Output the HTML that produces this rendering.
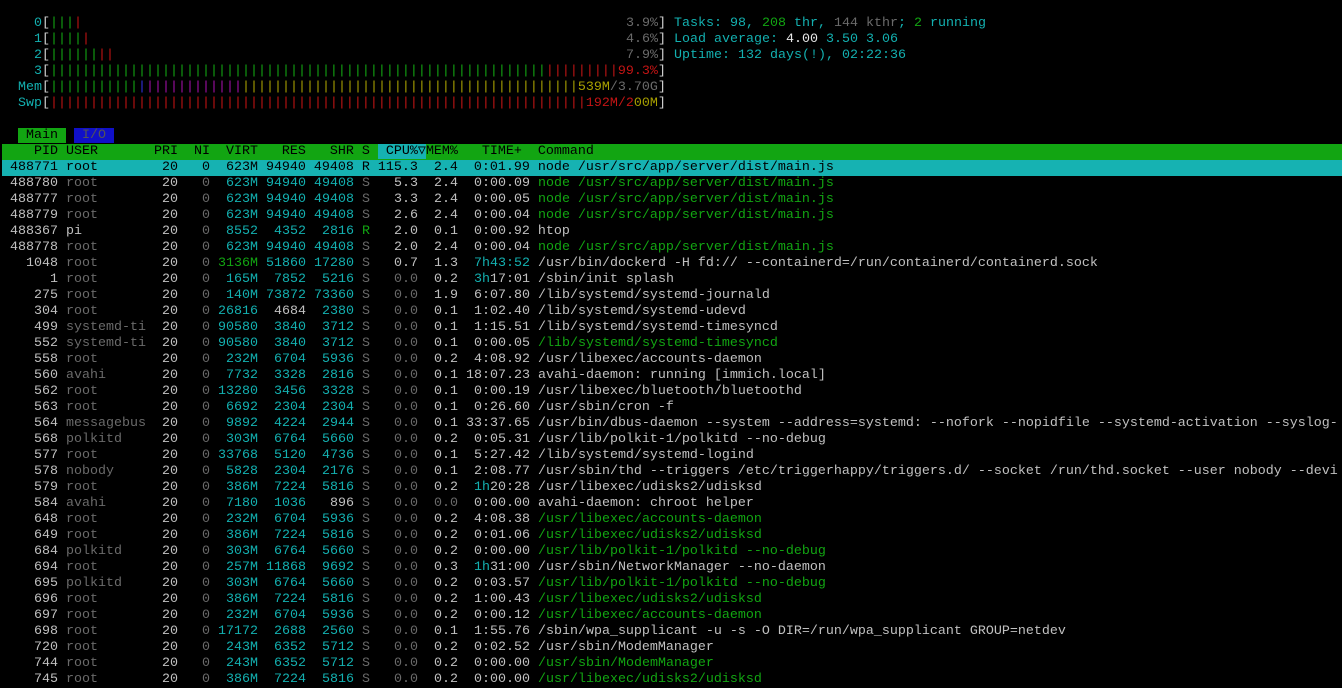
<!DOCTYPE html>
<html><head><meta charset="utf-8"><style>
html,body{margin:0;padding:0;background:#000;width:1342px;height:687px;overflow:hidden}
#t{position:absolute;left:2px;top:16px;right:0;font-family:"Liberation Mono","DejaVu Sans Mono",monospace;font-size:13.333px;line-height:16px;color:#c0c0c0}
#t div{height:16px;white-space:pre;position:relative}
i{font-style:normal}
.c{color:#13b0b0}.g{color:#12a512}.d{color:#6a6a6a}.r{color:#c21414}.y{color:#a8a000}.b{color:#3030e0}.m{color:#a010a8}.w{color:#e8e8e8}.br{color:#d0d0d0}
.a{position:absolute;top:0}
.hdr{background:#12a512;color:#000;width:1340px}
.sel{background:#16b2b2;color:#000;width:1340px}
.cp{background:#16b2b2}
.tm{background:#12a512;color:#000}.ti{background:#1010c8;color:#555}
</style></head><body><div id="t">
<div>    <i class=c>0</i><i class=br>[</i><i class=g>|||</i><i class=r>|</i><span class=a style="left:624px"><i class=d>3.9%</i><i class=br>]</i> <i class=c>Tasks: </i><i class=c>98</i><i class=c>, </i><i class=g>208</i><i class=c> thr, </i><i class=d>144 kthr</i><i class=c>; </i><i class=g>2</i><i class=c> running</i></span></div>
<div>    <i class=c>1</i><i class=br>[</i><i class=g>||||</i><i class=r>|</i><span class=a style="left:624px"><i class=d>4.6%</i><i class=br>]</i> <i class=c>Load average: </i><i class=w>4.00 </i><i class=c>3.50 </i><i class=c>3.06</i></span></div>
<div>    <i class=c>2</i><i class=br>[</i><i class=g>||||||</i><i class=r>||</i><span class=a style="left:624px"><i class=d>7.9%</i><i class=br>]</i> <i class=c>Uptime: 132 days(!), 02:22:36</i></span></div>
<div>    <i class=c>3</i><i class=br>[</i><i class=g>||||||||||||||||||||||||||||||||||||||||||||||||||||||||||||||</i><i class=r>|||||||||99.3%</i><i class=br>]</i></div>
<div>  <i class=c>Mem</i><i class=br>[</i><i class=g>|||||||||||</i><i class=b>|</i><i class=m>||||||||||||</i><i class=y>||||||||||||||||||||||||||||||||||||||||||539M</i><i class=d>/3.70G</i><i class=br>]</i></div>
<div>  <i class=c>Swp</i><i class=br>[</i><i class=r>|||||||||||||||||||||||||||||||||||||||||||||||||||||||||||||||||||192M/2</i><i class=y>00M</i><i class=br>]</i></div>
<div> </div>
<div>  <i class=tm> Main </i> <i class=ti> I/O </i></div>
<div class=hdr>    PID USER       PRI  NI  VIRT   RES   SHR S <i class=cp> CPU%▽</i>MEM%   TIME+  Command</div>
<div class=sel> 488771 root        20   0  623M 94940 49408 R 115.3  2.4  0:01.99 node /usr/src/app/server/dist/main.js</div>
<div> 488780 <i class=d>root      </i>  20   <i class=d>0</i>  <i class=c>623M</i> <i class=c>94940</i> <i class=c>49408</i> <i class=d>S</i>   5.3  2.4  0:00.09 <i class=g>node /usr/src/app/server/dist/main.js</i></div>
<div> 488777 <i class=d>root      </i>  20   <i class=d>0</i>  <i class=c>623M</i> <i class=c>94940</i> <i class=c>49408</i> <i class=d>S</i>   3.3  2.4  0:00.05 <i class=g>node /usr/src/app/server/dist/main.js</i></div>
<div> 488779 <i class=d>root      </i>  20   <i class=d>0</i>  <i class=c>623M</i> <i class=c>94940</i> <i class=c>49408</i> <i class=d>S</i>   2.6  2.4  0:00.04 <i class=g>node /usr/src/app/server/dist/main.js</i></div>
<div> 488367 pi          20   <i class=d>0</i>  <i class=c>8552</i>  <i class=c>4352</i>  <i class=c>2816</i> <i class=g>R</i>   2.0  0.1  0:00.92 htop</div>
<div> 488778 <i class=d>root      </i>  20   <i class=d>0</i>  <i class=c>623M</i> <i class=c>94940</i> <i class=c>49408</i> <i class=d>S</i>   2.0  2.4  0:00.04 <i class=g>node /usr/src/app/server/dist/main.js</i></div>
<div>   1048 <i class=d>root      </i>  20   <i class=d>0</i> <i class=g>3136M</i> <i class=c>51860</i> <i class=c>17280</i> <i class=d>S</i>   0.7  1.3  <i class=c>7h43:52</i> /usr/bin/dockerd -H fd:// --containerd=/run/containerd/containerd.sock</div>
<div>      1 <i class=d>root      </i>  20   <i class=d>0</i>  <i class=c>165M</i>  <i class=c>7852</i>  <i class=c>5216</i> <i class=d>S</i>   <i class=d>0.0</i>  0.2  <i class=c>3h</i>17:01 /sbin/init splash</div>
<div>    275 <i class=d>root      </i>  20   <i class=d>0</i>  <i class=c>140M</i> <i class=c>73872</i> <i class=c>73360</i> <i class=d>S</i>   <i class=d>0.0</i>  1.9  6:07.80 /lib/systemd/systemd-journald</div>
<div>    304 <i class=d>root      </i>  20   <i class=d>0</i> <i class=c>26816</i>  4684  <i class=c>2380</i> <i class=d>S</i>   <i class=d>0.0</i>  0.1  1:02.40 /lib/systemd/systemd-udevd</div>
<div>    499 <i class=d>systemd-ti</i>  20   <i class=d>0</i> <i class=c>90580</i>  <i class=c>3840</i>  <i class=c>3712</i> <i class=d>S</i>   <i class=d>0.0</i>  0.1  1:15.51 /lib/systemd/systemd-timesyncd</div>
<div>    552 <i class=d>systemd-ti</i>  20   <i class=d>0</i> <i class=c>90580</i>  <i class=c>3840</i>  <i class=c>3712</i> <i class=d>S</i>   <i class=d>0.0</i>  0.1  0:00.05 <i class=g>/lib/systemd/systemd-timesyncd</i></div>
<div>    558 <i class=d>root      </i>  20   <i class=d>0</i>  <i class=c>232M</i>  <i class=c>6704</i>  <i class=c>5936</i> <i class=d>S</i>   <i class=d>0.0</i>  0.2  4:08.92 /usr/libexec/accounts-daemon</div>
<div>    560 <i class=d>avahi     </i>  20   <i class=d>0</i>  <i class=c>7732</i>  <i class=c>3328</i>  <i class=c>2816</i> <i class=d>S</i>   <i class=d>0.0</i>  0.1 18:07.23 avahi-daemon: running [immich.local]</div>
<div>    562 <i class=d>root      </i>  20   <i class=d>0</i> <i class=c>13280</i>  <i class=c>3456</i>  <i class=c>3328</i> <i class=d>S</i>   <i class=d>0.0</i>  0.1  0:00.19 /usr/libexec/bluetooth/bluetoothd</div>
<div>    563 <i class=d>root      </i>  20   <i class=d>0</i>  <i class=c>6692</i>  <i class=c>2304</i>  <i class=c>2304</i> <i class=d>S</i>   <i class=d>0.0</i>  0.1  0:26.60 /usr/sbin/cron -f</div>
<div>    564 <i class=d>messagebus</i>  20   <i class=d>0</i>  <i class=c>9892</i>  <i class=c>4224</i>  <i class=c>2944</i> <i class=d>S</i>   <i class=d>0.0</i>  0.1 33:37.65 /usr/bin/dbus-daemon --system --address=systemd: --nofork --nopidfile --systemd-activation --syslog-</div>
<div>    568 <i class=d>polkitd   </i>  20   <i class=d>0</i>  <i class=c>303M</i>  <i class=c>6764</i>  <i class=c>5660</i> <i class=d>S</i>   <i class=d>0.0</i>  0.2  0:05.31 /usr/lib/polkit-1/polkitd --no-debug</div>
<div>    577 <i class=d>root      </i>  20   <i class=d>0</i> <i class=c>33768</i>  <i class=c>5120</i>  <i class=c>4736</i> <i class=d>S</i>   <i class=d>0.0</i>  0.1  5:27.42 /lib/systemd/systemd-logind</div>
<div>    578 <i class=d>nobody    </i>  20   <i class=d>0</i>  <i class=c>5828</i>  <i class=c>2304</i>  <i class=c>2176</i> <i class=d>S</i>   <i class=d>0.0</i>  0.1  2:08.77 /usr/sbin/thd --triggers /etc/triggerhappy/triggers.d/ --socket /run/thd.socket --user nobody --devi</div>
<div>    579 <i class=d>root      </i>  20   <i class=d>0</i>  <i class=c>386M</i>  <i class=c>7224</i>  <i class=c>5816</i> <i class=d>S</i>   <i class=d>0.0</i>  0.2  <i class=c>1h</i>20:28 /usr/libexec/udisks2/udisksd</div>
<div>    584 <i class=d>avahi     </i>  20   <i class=d>0</i>  <i class=c>7180</i>  <i class=c>1036</i>   896 <i class=d>S</i>   <i class=d>0.0</i>  <i class=d>0.0</i>  0:00.00 avahi-daemon: chroot helper</div>
<div>    648 <i class=d>root      </i>  20   <i class=d>0</i>  <i class=c>232M</i>  <i class=c>6704</i>  <i class=c>5936</i> <i class=d>S</i>   <i class=d>0.0</i>  0.2  4:08.38 <i class=g>/usr/libexec/accounts-daemon</i></div>
<div>    649 <i class=d>root      </i>  20   <i class=d>0</i>  <i class=c>386M</i>  <i class=c>7224</i>  <i class=c>5816</i> <i class=d>S</i>   <i class=d>0.0</i>  0.2  0:01.06 <i class=g>/usr/libexec/udisks2/udisksd</i></div>
<div>    684 <i class=d>polkitd   </i>  20   <i class=d>0</i>  <i class=c>303M</i>  <i class=c>6764</i>  <i class=c>5660</i> <i class=d>S</i>   <i class=d>0.0</i>  0.2  0:00.00 <i class=g>/usr/lib/polkit-1/polkitd --no-debug</i></div>
<div>    694 <i class=d>root      </i>  20   <i class=d>0</i>  <i class=c>257M</i> <i class=c>11868</i>  <i class=c>9692</i> <i class=d>S</i>   <i class=d>0.0</i>  0.3  <i class=c>1h</i>31:00 /usr/sbin/NetworkManager --no-daemon</div>
<div>    695 <i class=d>polkitd   </i>  20   <i class=d>0</i>  <i class=c>303M</i>  <i class=c>6764</i>  <i class=c>5660</i> <i class=d>S</i>   <i class=d>0.0</i>  0.2  0:03.57 <i class=g>/usr/lib/polkit-1/polkitd --no-debug</i></div>
<div>    696 <i class=d>root      </i>  20   <i class=d>0</i>  <i class=c>386M</i>  <i class=c>7224</i>  <i class=c>5816</i> <i class=d>S</i>   <i class=d>0.0</i>  0.2  1:00.43 <i class=g>/usr/libexec/udisks2/udisksd</i></div>
<div>    697 <i class=d>root      </i>  20   <i class=d>0</i>  <i class=c>232M</i>  <i class=c>6704</i>  <i class=c>5936</i> <i class=d>S</i>   <i class=d>0.0</i>  0.2  0:00.12 <i class=g>/usr/libexec/accounts-daemon</i></div>
<div>    698 <i class=d>root      </i>  20   <i class=d>0</i> <i class=c>17172</i>  <i class=c>2688</i>  <i class=c>2560</i> <i class=d>S</i>   <i class=d>0.0</i>  0.1  1:55.76 /sbin/wpa_supplicant -u -s -O DIR=/run/wpa_supplicant GROUP=netdev</div>
<div>    720 <i class=d>root      </i>  20   <i class=d>0</i>  <i class=c>243M</i>  <i class=c>6352</i>  <i class=c>5712</i> <i class=d>S</i>   <i class=d>0.0</i>  0.2  0:02.52 /usr/sbin/ModemManager</div>
<div>    744 <i class=d>root      </i>  20   <i class=d>0</i>  <i class=c>243M</i>  <i class=c>6352</i>  <i class=c>5712</i> <i class=d>S</i>   <i class=d>0.0</i>  0.2  0:00.00 <i class=g>/usr/sbin/ModemManager</i></div>
<div>    745 <i class=d>root      </i>  20   <i class=d>0</i>  <i class=c>386M</i>  <i class=c>7224</i>  <i class=c>5816</i> <i class=d>S</i>   <i class=d>0.0</i>  0.2  0:00.00 <i class=g>/usr/libexec/udisks2/udisksd</i></div>
</div></body></html>
